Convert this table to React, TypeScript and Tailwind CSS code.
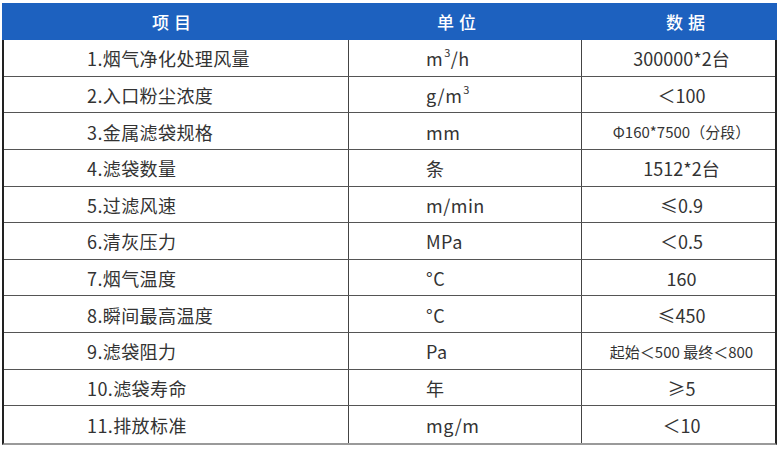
const FONT = "font-['Noto_Sans_CJK_SC','Noto_Sans',sans-serif]"

interface Row {
  name: string
  unit: React.ReactNode
  value: string
  small?: boolean
}

const sup = (s: string) => <sup className="text-[11px] -top-[0.6em] ml-[1px]">{s}</sup>

const rows: Row[] = [
  { name: '1.烟气净化处理风量', unit: <>m{sup('3')}/h</>, value: '300000*2台' },
  { name: '2.入口粉尘浓度', unit: <>g/m{sup('3')}</>, value: '＜100' },
  { name: '3.金属滤袋规格', unit: 'mm', value: 'Φ160*7500（分段）', small: true },
  { name: '4.滤袋数量', unit: '条', value: '1512*2台' },
  { name: '5.过滤风速', unit: 'm/min', value: '≤0.9' },
  { name: '6.清灰压力', unit: 'MPa', value: '＜0.5' },
  { name: '7.烟气温度', unit: '°C', value: '160' },
  { name: '8.瞬间最高温度', unit: '°C', value: '≤450' },
  { name: '9.滤袋阻力', unit: 'Pa', value: '起始＜500 最终＜800', small: true },
  { name: '10.滤袋寿命', unit: '年', value: '≥5' },
  { name: '11.排放标准', unit: 'mg/m', value: '＜10' },
]

export default function App() {
  return (
    <div className={`w-[780px] h-[452px] bg-white pt-[3px] pl-[2px] ${FONT}`}>
      <div className="w-[775px]">
        {/* Header */}
        <div className="flex h-[37px] bg-[#1d61bf] text-white text-[17px] font-medium">
          <div className="w-[347px] flex items-center justify-center gap-[5px] pr-[8px]">
            <span>项</span><span>目</span>
          </div>
          <div className="w-[233px] flex items-center justify-center gap-[5px] pr-[18px]">
            <span>单</span><span>位</span>
          </div>
          <div className="flex-1 flex items-center justify-center gap-[5px] pl-[12px]">
            <span>数</span><span>据</span>
          </div>
        </div>

        {/* Body */}
        <div className="grid grid-rows-[repeat(11,1fr)] h-[405px] border-l-2 border-r-2 border-l-[#222] border-r-[#222] border-b-2 border-b-[#9a9a9a] text-[#333]">
          {rows.map((r, i) => (
            <div
              key={r.name}
              className={[
                'flex',
                i < rows.length - 1 ? 'border-b border-[#555]' : '',
              ].join(' ')}
            >
              <div className="w-[345px] flex items-center pl-[83px] pt-[2px] text-[18px] tracking-[0.4px] border-r border-[#444]">
                {r.name}
              </div>
              <div className="w-[233px] flex items-center pl-[77px] pt-[2px] text-[18px] tracking-[0.5px] border-r border-[#444]">
                {r.unit}
              </div>
              <div
                className={[
                  'flex-1 flex items-center justify-center pl-[6px] pt-[2px]',
                  r.small ? 'text-[15px]' : 'text-[18px]',
                ].join(' ')}
              >
                {r.value}
              </div>
            </div>
          ))}
        </div>
      </div>
    </div>
  )
}
